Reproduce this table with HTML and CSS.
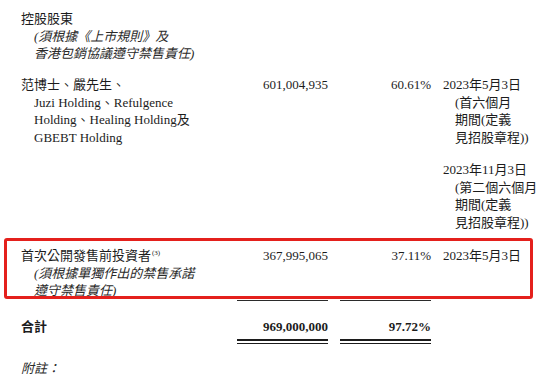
FILE: index.html
```html
<!DOCTYPE html>
<html lang="zh-Hant">
<head>
<meta charset="utf-8">
<link rel="stylesheet" href="styles.css">
</head>
<body>
<div class="sheet">
  <div class="head">
    <span class="line">控股股東</span>
    <span class="line it">(須根據《上市規則》及</span>
    <span class="line it">香港包銷協議遵守禁售責任)</span>
  </div>

  <div class="row r1">
    <div class="name">
      <span class="line">范博士、嚴先生、</span>
      <span class="line ind">Juzi Holding、Refulgence</span>
      <span class="line ind">Holding、Healing Holding及</span>
      <span class="line ind">GBEBT Holding</span>
    </div>
    <div class="num">601,004,935</div>
    <div class="pct">60.61%</div>
    <div class="date">
      <span class="line">2023年5月3日</span>
      <span class="line sub">(首六個月</span>
      <span class="line sub">期間(定義</span>
      <span class="line sub">見招股章程))</span>
    </div>
  </div>

  <div class="row r2">
    <div class="name"></div>
    <div class="num"></div>
    <div class="pct"></div>
    <div class="date">
      <span class="line">2023年11月3日</span>
      <span class="line sub">(第二個六個月</span>
      <span class="line sub">期間(定義</span>
      <span class="line sub">見招股章程))</span>
    </div>
  </div>

  <div class="row r3">
    <div class="name">
      <span class="line">首次公開發售前投資者<sup class="fn">(3)</sup></span>
      <span class="line it">(須根據單獨作出的禁售承諾</span>
      <span class="line it">遵守禁售責任)</span>
    </div>
    <div class="num">367,995,065</div>
    <div class="pct">37.11%</div>
    <div class="date">
      <span class="line">2023年5月3日</span>
    </div>
  </div>

  <div class="row rules">
    <div></div>
    <div class="rule single"></div>
    <div class="rule single gapped"></div>
    <div></div>
  </div>

  <div class="row total">
    <div class="name strong">合計</div>
    <div class="num strong">969,000,000</div>
    <div class="pct strong">97.72%</div>
    <div></div>
  </div>

  <div class="row rules dbl">
    <div></div>
    <div class="rule double"></div>
    <div class="rule double gapped"></div>
    <div></div>
  </div>

  <div class="note">附註：</div>

  <div class="highlight"></div>
</div>
</body>
</html>
```

FILE: styles.css
```css
html, body {
  margin: 0;
  padding: 0;
  background: #ffffff;
}

body {
  color: #1c1c1c;
  font-family: "Liberation Serif", "Noto Sans CJK TC", serif;
  font-size: 13px;
  line-height: 17.5px;
}

.sheet {
  position: relative;
  width: 529px;
  padding: 10px 0 0 21px;
}

.line {
  display: block;
  white-space: nowrap;
}

.it {
  font-style: italic;
  padding-left: 13px;
  color: #2a2a2a;
}

.ind {
  padding-left: 13px;
}

.row {
  display: grid;
  grid-template-columns: 216px 91px 103px 1fr;
}

.num,
.pct {
  text-align: right;
  white-space: nowrap;
}

.date {
  padding-left: 12px;
}

.sub {
  padding-left: 12px;
}

.r1 {
  margin-top: 13.5px;
}

.r2 {
  margin-top: 15px;
}

.r3 {
  margin-top: 16px;
}

.fn {
  font-size: 7px;
  line-height: 0;
  vertical-align: 5px;
  margin-left: 1px;
}

.rules {
  height: 2px;
}

.rule.gapped {
  margin-left: 12px;
}

.rule.single {
  border-top: 1.5px solid #2b2b2b;
  margin-top: 0.5px;
}

.total {
  margin-top: 16px;
}

.strong {
  font-weight: 700;
}

.dbl {
  margin-top: 3.5px;
  height: auto;
}

.rule.double {
  height: 2px;
  border-top: 2px solid #1c1c1c;
  border-bottom: 1.5px solid #1c1c1c;
}

.note {
  margin-top: 16px;
  font-style: italic;
  color: #2a2a2a;
}

.highlight {
  position: absolute;
  left: 4px;
  top: 238px;
  width: 523px;
  height: 55px;
  border: 3px solid #e4201c;
  border-radius: 3px;
  pointer-events: none;
}
```
